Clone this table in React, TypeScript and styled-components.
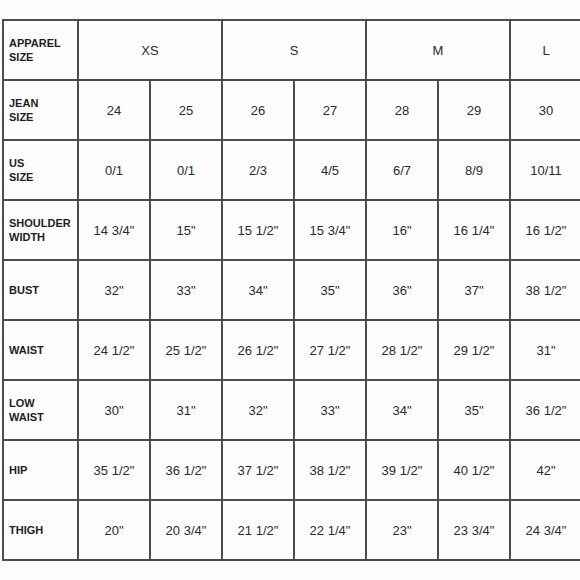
import React from "react";
import styled, { createGlobalStyle } from "styled-components";

const Global = createGlobalStyle`
  html, body { margin: 0; padding: 0; background: #fdfdfd; }
  body { font-family: "Liberation Sans", Arial, sans-serif; }
`;

const Page = styled.div`
  width: 580px;
  height: 580px;
  overflow: hidden;
  padding: 19px 0 0 2px;
  box-sizing: border-box;
  background: #fdfdfd;
`;

const Grid = styled.div`
  display: grid;
  grid-template-columns: 73px repeat(7, 70px);
  grid-auto-rows: 58px;
  gap: 2px;
  padding: 2px 0 2px 2px;
  width: max-content;
  background: #4d4d4d;
`;

const Cell = styled.div<{ $span?: number }>`
  background: #fdfdfd;
  display: flex;
  align-items: center;
  justify-content: center;
  grid-column: span ${(p) => p.$span ?? 1};
  font-size: 13px;
  color: #2b2b2b;
  white-space: nowrap;
`;

const Label = styled.div`
  background: #fdfdfd;
  display: flex;
  align-items: center;
  padding-left: 5px;
  font-size: 11px;
  font-weight: 700;
  line-height: 14px;
  color: #1e1e1e;
  white-space: pre-line;
`;

const header = [
  { t: "XS", s: 2 },
  { t: "S", s: 2 },
  { t: "M", s: 2 },
  { t: "L", s: 1 },
];

const rows: [string, string[]][] = [
  ["JEAN\nSIZE", ["24", "25", "26", "27", "28", "29", "30"]],
  ["US\nSIZE", ["0/1", "0/1", "2/3", "4/5", "6/7", "8/9", "10/11"]],
  ["SHOULDER\nWIDTH", ["14 3/4\"", "15\"", "15 1/2\"", "15 3/4\"", "16\"", "16 1/4\"", "16 1/2\""]],
  ["BUST", ["32\"", "33\"", "34\"", "35\"", "36\"", "37\"", "38 1/2\""]],
  ["WAIST", ["24 1/2\"", "25 1/2\"", "26 1/2\"", "27 1/2\"", "28 1/2\"", "29 1/2\"", "31\""]],
  ["LOW\nWAIST", ["30\"", "31\"", "32\"", "33\"", "34\"", "35\"", "36 1/2\""]],
  ["HIP", ["35 1/2\"", "36 1/2\"", "37 1/2\"", "38 1/2\"", "39 1/2\"", "40 1/2\"", "42\""]],
  ["THIGH", ["20\"", "20 3/4\"", "21 1/2\"", "22 1/4\"", "23\"", "23 3/4\"", "24 3/4\""]],
];

export default function App() {
  return (
    <>
      <Global />
      <Page>
        <Grid>
          <Label>{"APPAREL\nSIZE"}</Label>
          {header.map((h) => (
            <Cell key={h.t} $span={h.s}>
              {h.t}
            </Cell>
          ))}
          {rows.map(([label, vals]) => (
            <React.Fragment key={label}>
              <Label>{label}</Label>
              {vals.map((v, i) => (
                <Cell key={i}>{v}</Cell>
              ))}
            </React.Fragment>
          ))}
        </Grid>
      </Page>
    </>
  );
}
